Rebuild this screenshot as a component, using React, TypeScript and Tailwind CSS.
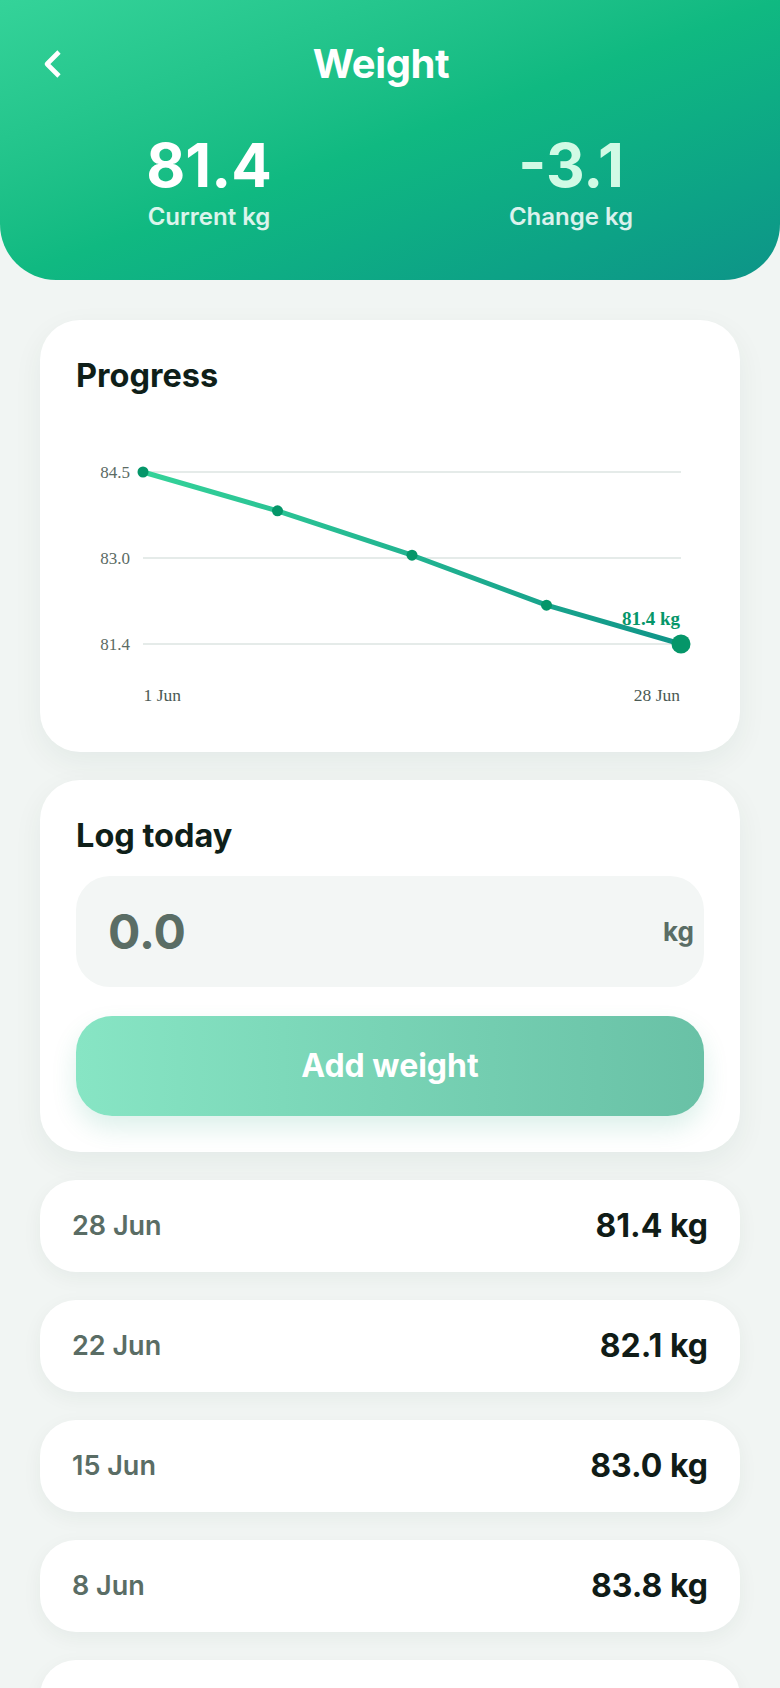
import React from "react";

const points = [84.5, 83.8, 83.0, 82.1, 81.4];
const px = (i: number) => 67 + i * 134.5;
const py = (v: number) => 68 + (84.5 - v) * 55.48;

function Chart() {
  const d = points.map((v, i) => `${i === 0 ? "M" : "L"}${px(i)} ${py(v)}`).join(" ");
  const grid = [
    { v: 84.5, label: "84.5" },
    { v: 82.95, label: "83.0" },
    { v: 81.4, label: "81.4" },
  ];
  return (
    <svg width="628" height="312" viewBox="0 0 628 312" className="block mt-2">
      <defs>
        <linearGradient id="lg" gradientUnits="userSpaceOnUse" x1="67" y1="0" x2="605" y2="0">
          <stop offset="0" stopColor="#34d399" />
          <stop offset="1" stopColor="#0f9488" />
        </linearGradient>
      </defs>
      {grid.map((g) => (
        <g key={g.label}>
          <line x1="67" x2="605" y1={py(g.v)} y2={py(g.v)} stroke="#e5ebe9" strokeWidth="2" />
          <text
            x="54"
            y={py(g.v) + 6}
            textAnchor="end"
            fontSize="17"
            fill="#5b6b64"
            style={{ fontFamily: '"Liberation Serif", serif' }}
          >
            {g.label}
          </text>
        </g>
      ))}
      <path d={d} fill="none" stroke="url(#lg)" strokeWidth="5" strokeLinejoin="round" strokeLinecap="round" />
      {points.map((v, i) => (
        <circle key={i} cx={px(i)} cy={py(v)} r={i === points.length - 1 ? 9.5 : 5.5} fill="#059669" />
      ))}
      <text
        x="604"
        y="220.5"
        textAnchor="end"
        fontSize="19"
        fontWeight="700"
        fill="#059669"
        style={{ fontFamily: '"Liberation Serif", serif' }}
      >
        81.4 kg
      </text>
      <text x="67.5" y="297" fontSize="17.5" fill="#4b5a54" style={{ fontFamily: '"Liberation Serif", serif' }}>
        1 Jun
      </text>
      <text
        x="604"
        y="297"
        textAnchor="end"
        fontSize="17.5"
        fill="#4b5a54"
        style={{ fontFamily: '"Liberation Serif", serif' }}
      >
        28 Jun
      </text>
    </svg>
  );
}

const rows = [
  ["28 Jun", "81.4 kg"],
  ["22 Jun", "82.1 kg"],
  ["15 Jun", "83.0 kg"],
  ["8 Jun", "83.8 kg"],
  ["1 Jun", "84.5 kg"],
];

export default function App() {
  return (
    <div className="min-h-screen bg-[#f1f5f3] pb-10" style={{ fontFamily: 'Inter, "Noto Sans", sans-serif' }}>
      <header className="h-[280px] rounded-b-[56px] bg-linear-to-br from-[#34d399] via-[#10b981] to-[#0d9488] px-7 pt-10">
        <div className="flex h-12 items-center">
          <button className="flex h-12 w-12 items-center justify-center text-white">
            <svg width="22" height="30" viewBox="0 0 22 30" fill="none">
              <path d="M18 3 L6 15 L18 27" stroke="white" strokeWidth="4.6" strokeLinejoin="round" />
            </svg>
          </button>
          <h1 className="flex-1 text-center text-[40px] font-bold leading-[48px] tracking-[-0.01em] text-white">
            Weight
          </h1>
          <div className="w-[66px]" />
        </div>
        <div className="mt-[47px] grid grid-cols-2">
          <div className="flex flex-col items-center">
            <div className="text-[60px] font-bold leading-[60px] text-white">81.4</div>
            <div className="mt-1.5 text-[24px] font-semibold leading-8 text-white/85">Current kg</div>
          </div>
          <div className="flex flex-col items-center">
            <div className="text-[60px] font-bold leading-[60px] text-[#d1fae5]">-3.1</div>
            <div className="mt-1.5 text-[24px] font-semibold leading-8 text-white/85">Change kg</div>
          </div>
        </div>
      </header>

      <main className="flex flex-col gap-7 px-10 pt-10">
        <section className="rounded-[40px] bg-white px-9 pt-9 pb-9 shadow-[0_10px_30px_rgba(15,60,45,0.06)]">
          <h2 className="text-[32.5px] font-bold leading-[40px] text-[#0f1f19]">Progress</h2>
          <Chart />
        </section>

        <section className="rounded-[40px] bg-white px-9 pt-9 pb-9 shadow-[0_10px_30px_rgba(15,60,45,0.06)]">
          <h2 className="text-[32.5px] font-bold leading-[40px] text-[#0f1f19]">Log today</h2>
          <div className="mt-5 flex h-[111px] items-center rounded-[34px] bg-[#f3f6f5] pl-8 pr-2.5">
            <input
              placeholder="0.0"
              className="min-w-0 flex-1 bg-transparent text-[48px] font-bold text-[#5a6d65] outline-none placeholder:text-[#5a6d65]"
            />
            <span className="text-[26px] font-bold text-[#5a6d65]">kg</span>
          </div>
          <button className="mt-[29px] flex h-[100px] w-full items-center justify-center rounded-[36px] bg-linear-to-r from-[#87e5c4] to-[#69c1a6] text-[32px] font-bold text-white shadow-[0_12px_26px_rgba(5,150,105,0.14)]">
            Add weight
          </button>
        </section>

        {rows.map(([date, kg]) => (
          <div
            key={date}
            className="flex h-[92px] items-center justify-between rounded-[36px] bg-white px-8 shadow-[0_6px_20px_rgba(15,60,45,0.05)]"
          >
            <span className="text-[27px] font-semibold text-[#5a6d65]">{date}</span>
            <span className="text-[32px] font-bold text-[#101c17]">{kg}</span>
          </div>
        ))}
      </main>
    </div>
  );
}
